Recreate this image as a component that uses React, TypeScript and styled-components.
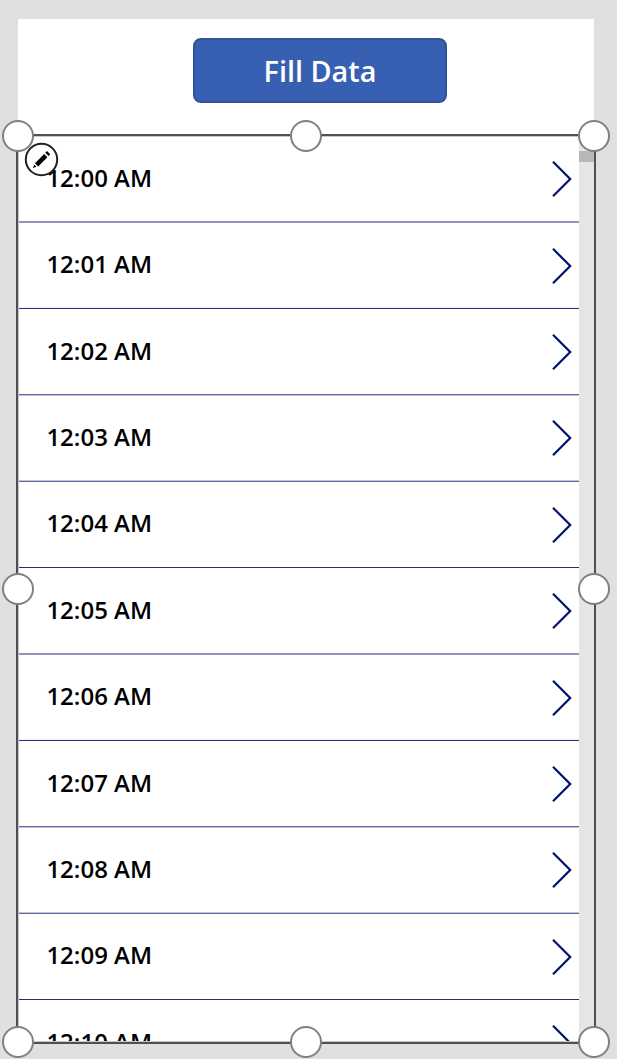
import React from "react";
import styled, { createGlobalStyle } from "styled-components";

const Global = createGlobalStyle`
  * { box-sizing: border-box; }
  html, body { margin: 0; height: 100%; overflow: hidden; background: #e0e0e0; }
`;

const Studio = styled.main`
  height: 1059px;
  padding: 19px 21px 0 16px;
  background: #e0e0e0;
  font-family: "Open Sans", "Liberation Sans", sans-serif;
  overflow: hidden;
`;

const Header = styled.header`
  display: flex;
  justify-content: center;
  height: 115px;
  margin: 0 2px;
  padding-top: 19px;
  padding-left: 28px;
  background: #fff;
`;

const FillButton = styled.button`
  width: 254px;
  height: 65px;
  padding: 0 0 1px;
  border: 2px solid #2f5299;
  border-radius: 8px;
  background: #3860b2;
  color: #fff;
  font: 600 28.8px "Open Sans", sans-serif;
`;

const Selection = styled.section`
  position: relative;
  height: 910px;
  border: 2px solid #505050;
  background: #fff;
`;

const Gallery = styled.div`
  display: flex;
  height: 906px;
  border: solid #c8c8c8;
  border-width: 1px 0 1px 1px;
`;

const Rows = styled.ul`
  flex: 1;
  margin: 0;
  padding: 0;
  overflow: hidden;
  list-style: none;
`;

const Row = styled.li<{ $upper: string; $lower: string }>`
  display: flex;
  align-items: flex-start;
  justify-content: space-between;
  height: 86.4px;
  padding: 0 6px 0 27.4px;
  background: linear-gradient(${(p) => p.$upper} 50%, ${(p) => p.$lower} 50%) left bottom / 100% 2px no-repeat;

  &:first-child {
    margin-top: -0.4px;
  }
`;

const Time = styled.span`
  margin-top: 25.2px;
  color: #000;
  font-size: 24px;
  font-weight: 600;
  line-height: 32px;
`;

const Arrow = styled.svg`
  width: 22px;
  height: 38px;
  margin-top: 23.7px;
  flex: none;
`;

const Track = styled.div`
  width: 15px;
  padding-top: 14px;
  background: #e5e5e5;
`;

const Thumb = styled.div`
  height: 11px;
  background: #b8b8b8;
`;

const Handle = styled.i<{ $x: number; $y: number }>`
  position: absolute;
  left: ${(p) => p.$x}px;
  top: ${(p) => p.$y}px;
  width: 32px;
  height: 32px;
  border: 2px solid #808080;
  border-radius: 50%;
  background: #fff;
`;

const EditBadge = styled.svg`
  position: absolute;
  left: 6px;
  top: 5px;
  width: 36px;
  height: 36px;
`;

const times = [
  "12:00 AM",
  "12:01 AM",
  "12:02 AM",
  "12:03 AM",
  "12:04 AM",
  "12:05 AM",
  "12:06 AM",
  "12:07 AM",
  "12:08 AM",
  "12:09 AM",
  "12:10 AM",
];

// Row pitch is 86.4px, so the separator's two pixel rows repeat every five items.
const separators = [
  ["#8e93c2", "#8e93c2"],
  ["#f0f1f7", "#2b3389"],
  ["#5c64a4", "#bfc3de"],
  ["#bfc3de", "#5c64a4"],
  ["#232c86", "#ffffff"],
];

const handles = [
  [-16, -16], [272, -16], [560, -16],
  [-16, 437], [560, 437],
  [-16, 890], [272, 890], [560, 890],
];

export default function App() {
  return (
    <>
      <Global />
      <Studio>
        <Header>
          <FillButton>Fill Data</FillButton>
        </Header>
        <Selection>
          <Gallery>
            <Rows>
              {times.map((time, i) => (
                <Row key={time} $upper={separators[i % 5][0]} $lower={separators[i % 5][1]}>
                  <Time>{time}</Time>
                  <Arrow viewBox="0 0 22 38" fill="none" stroke="#00106e" strokeWidth="2.2">
                    <path d="M2 1.8 19.2 19 2 36.2" />
                  </Arrow>
                </Row>
              ))}
            </Rows>
            <Track>
              <Thumb />
            </Track>
          </Gallery>
          {handles.map(([x, y]) => (
            <Handle key={`${x}:${y}`} $x={x} $y={y} />
          ))}
          <EditBadge viewBox="0 0 36 36">
            <circle cx="17.5" cy="18.5" r="15.7" fill="#fff" stroke="#222" strokeWidth="2" />
            <path
              d="M9 27 10.2 23.6 12.4 25.8Z M11 22.2 20.2 13 23.4 16.2 14.2 25.4Z M21.3 11.8 23 10.1 26.2 13.3 24.5 15Z"
              fill="#000"
            />
          </EditBadge>
        </Selection>
      </Studio>
    </>
  );
}
